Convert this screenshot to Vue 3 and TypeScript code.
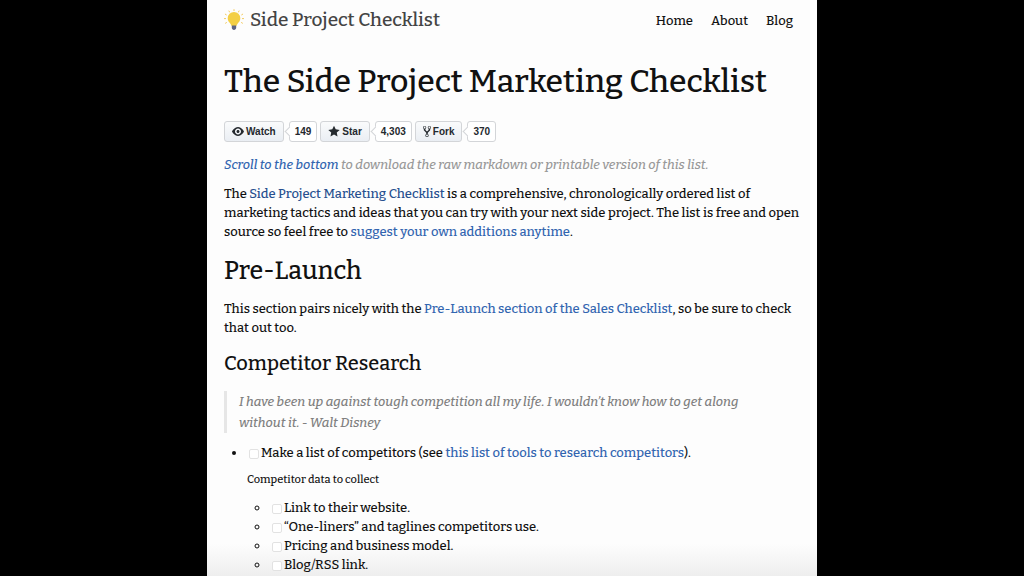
<script setup lang="ts">
interface Counter {
  icon: 'eye' | 'star' | 'fork'
  label: string
  count: string
}

const nav: string[] = ['Home', 'About', 'Blog']

const counters: Counter[] = [
  { icon: 'eye', label: 'Watch', count: '149' },
  { icon: 'star', label: 'Star', count: '4,303' },
  { icon: 'fork', label: 'Fork', count: '370' },
]

const dataPoints: string[] = [
  'Link to their website.',
  '“One-liners” and taglines competitors use.',
  'Pricing and business model.',
  'Blog/RSS link.',
]
</script>

<template>
  <div class="page">
    <header class="top">
      <a class="brand" href="#">
        <svg class="bulb" viewBox="0 0 20 22" aria-hidden="true">
          <g stroke="#f3cb5f" stroke-width="1" stroke-linecap="round">
            <path d="M10 .6v1M5 2l.5 1M15 2l-.5 1M1.300 5.200l1 .6M18.700 5.200l-1 .6M.4 9.600h1.200M18.400 9.600h1.200M1.500 14.200l1-.6M18.500 14.200l-1-.6" />
          </g>
          <path d="M10 3a6.300 6.300 0 0 0-6.300 6.300c0 2.700 1.500 4 2.700 5.400.7.800 1 1.500 1.200 2.300h4.800c.2-.8.500-1.500 1.200-2.300 1.200-1.400 2.700-2.700 2.700-5.400A6.300 6.300 0 0 0 10 3z" fill="#f3cf45" />
          <path d="M7.800 16.600h4.400v2.200c0 1.200-1 2.200-2.200 2.200s-2.200-1-2.200-2.200z" fill="#5d6485" />
        </svg>
        <span>Side Project Checklist</span>
      </a>
      <nav class="nav">
        <a v-for="item in nav" :key="item" href="#">{{ item }}</a>
      </nav>
    </header>

    <main>
      <h1>The Side Project Marketing Checklist</h1>

      <div class="counters">
        <div v-for="c in counters" :key="c.label" class="counter">
          <button type="button" class="action">
            <svg v-if="c.icon === 'eye'" class="eye" viewBox="0 0 16 16" aria-hidden="true">
              <path d="M8.060 2C3 2 0 8 0 8s3 6 8.060 6C13 14 16 8 16 8s-3-6-7.940-6zM8 12c-2.200 0-4-1.780-4-4 0-2.200 1.800-4 4-4 2.220 0 4 1.800 4 4 0 2.220-1.780 4-4 4zm2-4c0 1.110-.890 2-2 2s-2-.890-2-2 .890-2 2-2 2 .890 2 2z" />
            </svg>
            <svg v-else-if="c.icon === 'star'" class="star" viewBox="0 0 14 16" aria-hidden="true">
              <path d="M14 6l-4.900-.640L7 1 4.900 5.360 0 6l3.600 3.260L2.670 14 7 11.670 11.330 14l-.930-4.740z" />
            </svg>
            <svg v-else class="fork" viewBox="0 0 10 16" aria-hidden="true">
              <path d="M8 1a1.993 1.993 0 0 0-1 3.720V6L5 8 3 6V4.720A1.993 1.993 0 0 0 2 1a1.993 1.993 0 0 0-1 3.720V6.500l3 3v1.780A1.993 1.993 0 0 0 5 15a1.993 1.993 0 0 0 1-3.720V9.500l3-3V4.720A1.993 1.993 0 0 0 8 1zM2 4.200C1.340 4.200.8 3.650.8 3c0-.650.550-1.200 1.200-1.200.650 0 1.200.550 1.200 1.200 0 .650-.550 1.200-1.200 1.200zm3 10c-.660 0-1.200-.550-1.200-1.200 0-.650.550-1.200 1.200-1.200.650 0 1.200.550 1.200 1.200 0 .650-.550 1.200-1.200 1.200zm3-10c-.660 0-1.200-.550-1.200-1.200 0-.650.550-1.200 1.200-1.200.650 0 1.200.550 1.200 1.200 0 .650-.550 1.200-1.200 1.200z" />
            </svg>
            <span>{{ c.label }}</span>
          </button>
          <a class="count" href="#">{{ c.count }}</a>
        </div>
      </div>

      <p class="hint"><a href="#">Scroll to the bottom</a> to download the raw markdown or printable version of this list.</p>

      <p class="intro">
        The <a class="strong" href="#">Side Project Marketing Checklist</a> is a comprehensive, chronologically
        ordered list of marketing tactics and ideas that you can try with your next side project. The list is
        free and open source so feel free to <a href="#">suggest your own additions anytime</a>.
      </p>

      <h2>Pre-Launch</h2>
      <p class="section">
        This section pairs nicely with the <a href="#">Pre-Launch section of the Sales Checklist</a>, so be sure
        to check that out too.
      </p>

      <h3>Competitor Research</h3>
      <blockquote>
        I have been up against tough competition all my life. I wouldn’t know how to get along without it. - Walt
        Disney
      </blockquote>

      <ul class="tasks">
        <li>
          <input id="task-list" type="checkbox" /><label for="task-list">Make a list of competitors (see <a href="#">this list of tools to research competitors</a>).</label>
          <p class="note">Competitor data to collect</p>
          <ul class="data">
            <li v-for="(point, i) in dataPoints" :key="point">
              <input :id="`data-${i}`" type="checkbox" /><label :for="`data-${i}`">{{ point }}</label>
            </li>
          </ul>
        </li>
      </ul>
    </main>
  </div>
</template>

<style>
html,
body {
  height: 100%;
  margin: 0;
  background: #000;
}

body {
  overflow: hidden;
}
</style>

<style scoped>
.page {
  box-sizing: border-box;
  max-width: 610px;
  min-height: 100vh;
  margin: 0 auto;
  padding: 0 14px 0 17px;
  background: linear-gradient(to bottom, #fdfdfd calc(100vh - 32px), #eeeeee 100vh);
  color: #111;
  font-family: "Bitter", "DejaVu Serif Condensed", "DejaVu Serif", serif;
  font-size: 13px;
  font-weight: 500;
  line-height: 19px;
}

a {
  color: #3265b0;
  text-decoration: none;
}

.top {
  display: flex;
  align-items: center;
  justify-content: space-between;
  height: 40px;
}

.brand {
  display: flex;
  align-items: center;
  gap: 6px;
  color: #444;
  font-size: 19px;
  line-height: 24px;
}

.bulb {
  width: 20px;
  height: 22px;
}

.nav {
  display: flex;
  gap: 18px;
  margin-right: 10px;
}

.nav a {
  color: #111;
}

h1,
h2,
h3,
p,
blockquote,
ul {
  margin: 0;
  padding: 0;
}

h1 {
  margin-top: 21px;
  font-size: 32px;
  font-weight: 500;
  line-height: 40px;
}

.counters {
  display: flex;
  gap: 3px;
  margin-top: 20px;
  font-family: "Liberation Sans", Arial, sans-serif;
  font-size: 10px;
  font-weight: 700;
}

.counter {
  display: flex;
  gap: 5px;
}

.action,
.count {
  box-sizing: border-box;
  height: 21px;
  border: 1px solid #d3d5d8;
  border-radius: 3px;
  color: #24292e;
  font: inherit;
  line-height: 19px;
}

.action {
  display: flex;
  align-items: center;
  gap: 2px;
  padding: 0 7px;
  background: linear-gradient(#fafbfc, #eaeef3);
}

.action svg {
  height: 13px;
  fill: #24292e;
}

.eye,
.star {
  width: 12px;
}

.fork {
  width: 8px;
}

.count {
  position: relative;
  padding: 0 5px;
  background: #fff;
}

.count::before {
  position: absolute;
  top: 6px;
  left: -4px;
  width: 6px;
  height: 6px;
  border: 1px solid #d3d5d8;
  border-width: 0 0 1px 1px;
  background: #fff;
  content: "";
  transform: rotate(45deg);
}

.hint {
  margin-top: 13px;
  color: #999;
  font-style: italic;
}

.intro {
  margin-top: 10px;
}

.strong {
  color: #27508f;
}

h2 {
  margin-top: 14px;
  font-size: 25px;
  font-weight: 500;
  line-height: 32px;
}

.section {
  margin-top: 12px;
}

h3 {
  margin-top: 13px;
  font-size: 20px;
  font-weight: 500;
  line-height: 26px;
}

blockquote {
  margin-top: 15px;
  padding: 0 40px 0 12px;
  border-left: 3px solid #e6e6e6;
  color: #808080;
  font-size: 13px;
  font-style: italic;
  line-height: 21px;
}

.tasks {
  margin-top: 10px;
  padding-left: 23px;
  list-style: disc;
}

li input {
  box-sizing: border-box;
  width: 10px;
  height: 10px;
  margin: 0 2px;
  border: 1px solid #e2e2e2;
  border-radius: 2px;
  background: #fff;
  vertical-align: -2px;
  appearance: none;
}

.note {
  margin-top: 8px;
  font-size: 11px;
}

.data {
  margin-top: 9px;
  padding-left: 23px;
  list-style: circle;
}
</style>
